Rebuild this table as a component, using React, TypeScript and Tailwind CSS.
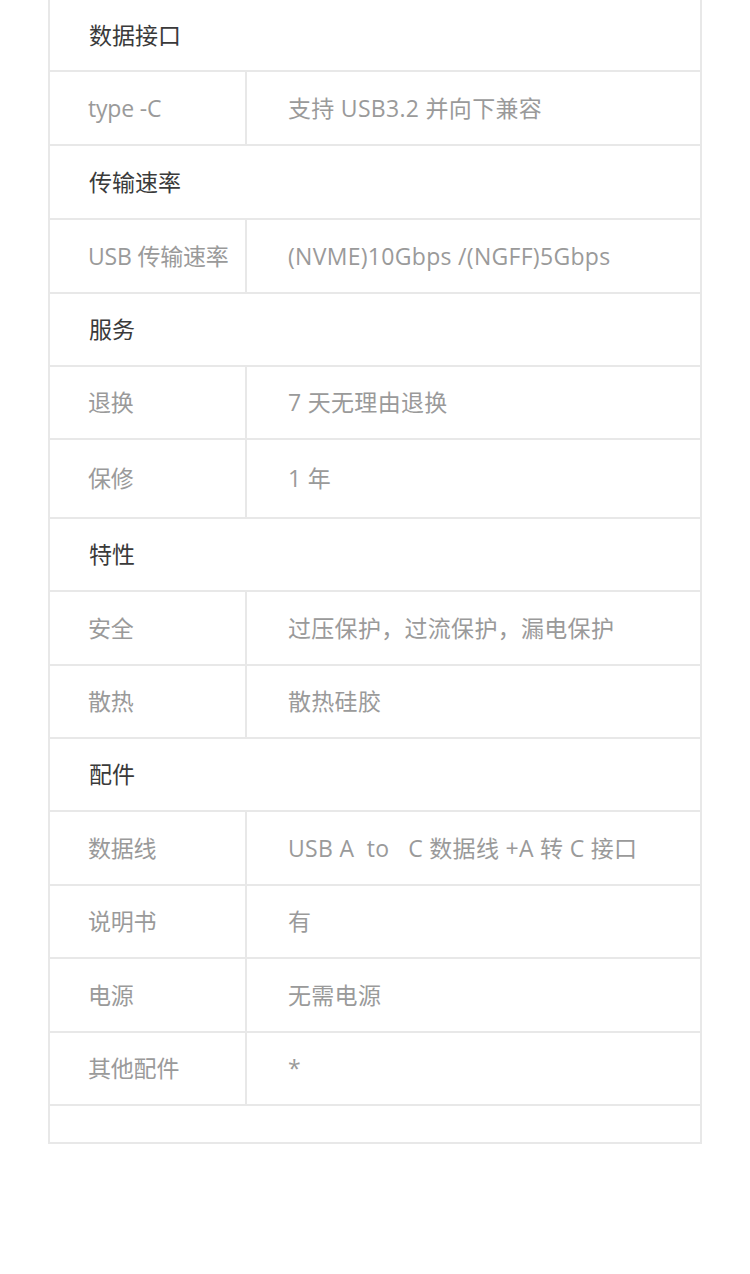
type Row =
  | { kind: 'head'; title: string; h: string }
  | { kind: 'item'; label: string; value: string; h: string };

const rows: Row[] = [
  { kind: 'head', title: '数据接口', h: 'h-[70px]' },
  { kind: 'item', label: 'type -C', value: '支持 USB3.2 并向下兼容', h: 'h-[72px]' },
  { kind: 'head', title: '传输速率', h: 'h-[72px]' },
  { kind: 'item', label: 'USB 传输速率', value: '(NVME)10Gbps /(NGFF)5Gbps', h: 'h-[72px]' },
  { kind: 'head', title: '服务', h: 'h-[71px]' },
  { kind: 'item', label: '退换', value: '7 天无理由退换', h: 'h-[71px]' },
  { kind: 'item', label: '保修', value: '1 年', h: 'h-[77px]' },
  { kind: 'head', title: '特性', h: 'h-[71px]' },
  { kind: 'item', label: '安全', value: '过压保护，过流保护，漏电保护', h: 'h-[72px]' },
  { kind: 'item', label: '散热', value: '散热硅胶', h: 'h-[71px]' },
  { kind: 'head', title: '配件', h: 'h-[71px]' },
  { kind: 'item', label: '数据线', value: 'USB A  to   C 数据线 +A 转 C 接口', h: 'h-[72px]' },
  { kind: 'item', label: '说明书', value: '有', h: 'h-[71px]' },
  { kind: 'item', label: '电源', value: '无需电源', h: 'h-[72px]' },
  { kind: 'item', label: '其他配件', value: '*', h: 'h-[71px]' },
];

export default function App() {
  return (
    <div className="w-[750px] h-[1274px] bg-white font-['Open_Sans','Noto_Sans_CJK_SC',sans-serif] text-[23px]">
      {/* 参数表 */}
      <div className="mx-[48px] border-x-2 border-b-2 border-[#e8e8e8]">
        {rows.map((row, i) =>
          row.kind === 'head' ? (
            <div
              key={i}
              className={`${row.h} box-content flex items-center pl-[39px] border-b-2 border-[#e8e8e8] text-[#3a3a3a]`}
            >
              {row.title}
            </div>
          ) : (
            <div
              key={i}
              className={`${row.h} box-content flex border-b-2 border-[#e8e8e8] text-[#9a9a9a]`}
            >
              <div className="w-[197px] flex items-center pl-[38px] border-r-2 border-[#e8e8e8] whitespace-nowrap tracking-[-0.2px]">
                {row.label}
              </div>
              <div className="flex-1 flex items-center pl-[41px] whitespace-pre tracking-[0.3px]">{row.value}</div>
            </div>
          )
        )}
        <div className="h-[36px]" />
      </div>
    </div>
  );
}
